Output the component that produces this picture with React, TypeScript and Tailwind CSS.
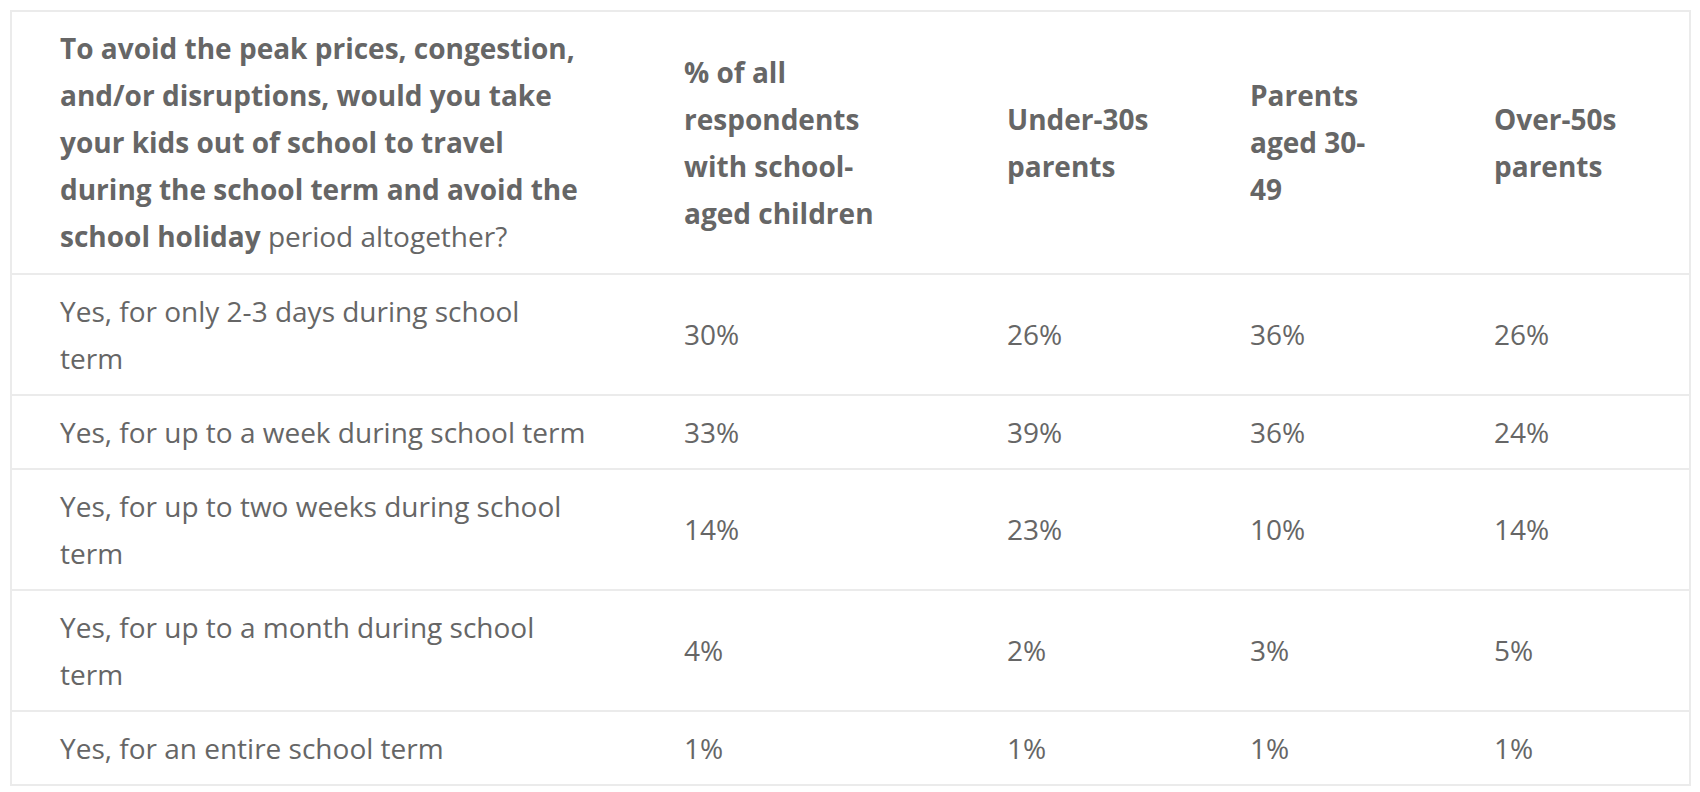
const rows = [
  ["Yes, for only 2-3 days during school term", "30%", "26%", "36%", "26%"],
  ["Yes, for up to a week during school term", "33%", "39%", "36%", "24%"],
  ["Yes, for up to two weeks during school term", "14%", "23%", "10%", "14%"],
  ["Yes, for up to a month during school term", "4%", "2%", "3%", "5%"],
  ["Yes, for an entire school term", "1%", "1%", "1%", "1%"],
];

export default function App() {
  return (
    <div className="bg-white min-h-screen pt-[10px] pl-[10px] pr-[10px] font-['Open_Sans',sans-serif] text-[#666]">
      <table className="w-[1679px] border-collapse border-2 border-[#ebebeb] table-fixed">
        <colgroup>
          <col className="w-[625px]" />
          <col className="w-[323px]" />
          <col className="w-[243px]" />
          <col className="w-[244px]" />
          <col className="w-[244px]" />
        </colgroup>
        <thead>
          <tr className="border-b-2 border-[#ebebeb] text-[28px] leading-[47px] font-bold">
            <th className="text-left align-middle px-[48px] py-[13px]">
              To avoid the peak prices, congestion, and/or disruptions, would you take your kids out of school to travel during the school term and avoid the school holiday{" "}
              <span className="font-normal">period altogether?</span>
            </th>
            <th className="text-left align-middle px-[48px] py-[13px]">% of all respondents with school-aged children</th>
            <th className="text-left align-middle px-[48px] py-[13px]">Under-30s parents</th>
            <th className="text-left align-middle pl-[48px] pr-[56px] py-[13px]">Parents aged 30-49</th>
            <th className="text-left align-middle px-[48px] py-[13px]">Over-50s parents</th>
          </tr>
        </thead>
        <tbody>
          {rows.map((row) => (
            <tr key={row[0]} className="border-b-2 border-[#ebebeb] text-[28px] leading-[47px]">
              {row.map((cell, i) => (
                <td key={i} className="align-middle px-[48px] py-[12.5px]">{cell}</td>
              ))}
            </tr>
          ))}
        </tbody>
      </table>
    </div>
  );
}
